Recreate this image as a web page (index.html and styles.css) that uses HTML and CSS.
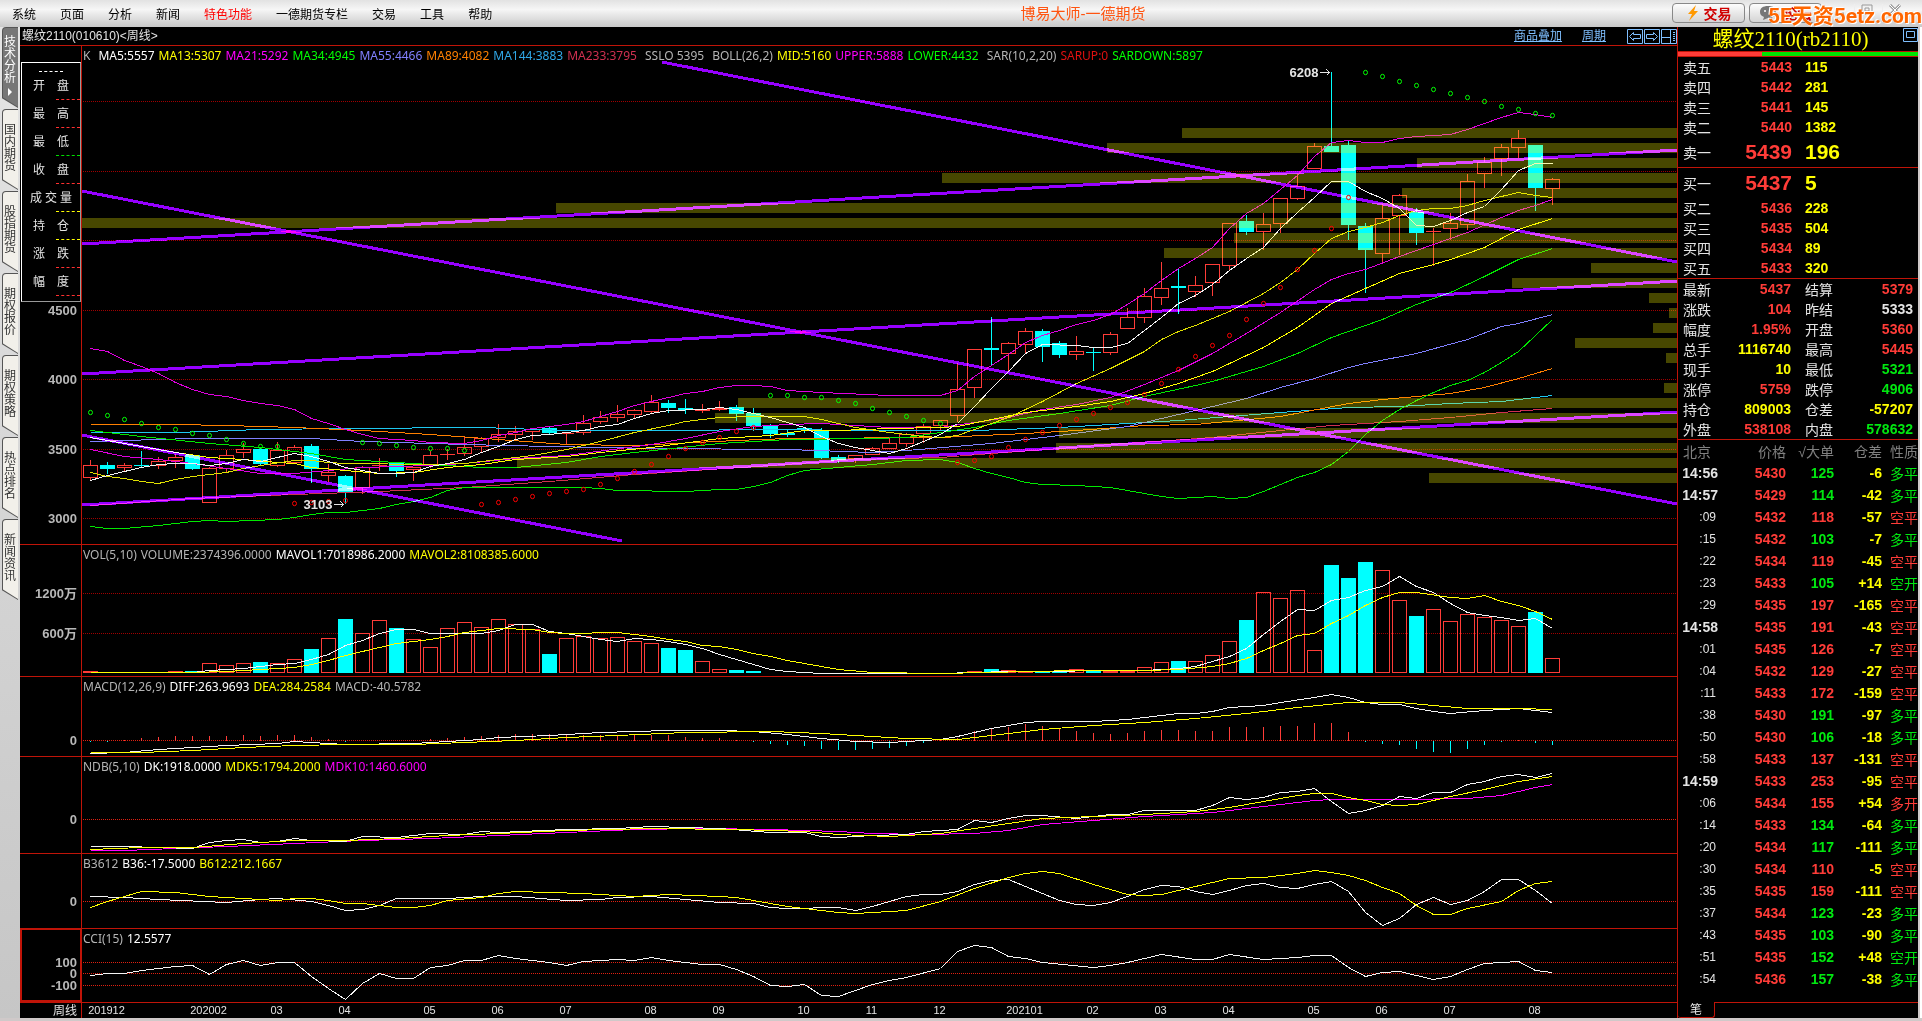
FILE: index.html
```html
<!DOCTYPE html>
<html lang="zh-CN">
<head>
  <meta charset="UTF-8">
  <meta name="viewport" content="width=device-width, initial-scale=1.0">
  <title>博易大师-一德期货</title>
  <link rel="stylesheet" href="styles.css">
</head>
<body>

  <!-- Menu bar -->
  <header class="topbar">
    <nav class="menu">
      <button>系统</button>
      <button>页面</button>
      <button>分析</button>
      <button>新闻</button>
      <button class="hot">特色功能</button>
      <button>一德期货专栏</button>
      <button>交易</button>
      <button>工具</button>
      <button>帮助</button>
    </nav>
    <h1 class="app-title">博易大师-一德期货</h1>
    <div class="top-actions">
      <button class="pill">
        <svg width="14" height="16" viewBox="0 0 14 16"><path d="M10 0L2 9h4L3 16l9-10H8z" fill="#f90"/></svg>交易
      </button>
      <button class="pill">
        <svg width="20" height="14" viewBox="0 0 20 14"><path d="M8 0c5 0 8 2 8 6s-3 6-8 6l-5 2 1-3C1 10 0 8 0 6c0-4 3-6 8-6z" fill="#777"/><circle cx="5" cy="5" r="1" fill="#fff"/><circle cx="10" cy="5" r="1" fill="#fff"/></svg>论坛
      </button>
      <button class="win" aria-label="最小化"><svg width="12" height="12"><path d="M1 9.500h10" stroke="#aaa" stroke-width="2"/></svg></button>
      <button class="win" aria-label="还原"><svg width="12" height="12"><path d="M1 1h10v9H1zM4 4h4v3H4z" fill="none" stroke="#999"/></svg></button>
      <button class="win" aria-label="关闭"><svg width="12" height="12"><path d="M1 1l10 10M11 1L1 11" stroke="#999" stroke-width="3"/><path d="M1 1l10 10M11 1L1 11" stroke="#fff"/></svg></button>
    </div>
    <span class="watermark">5E天资5etz.com</span>
  </header>

  <div class="workspace">

    <!-- Left page tabs -->
    <nav class="side-tabs">
      <button class="side-tab active"><span>技术分析</span><i></i></button>
      <button class="side-tab"><span>国内期货</span></button>
      <button class="side-tab"><span>股指期货</span></button>
      <button class="side-tab"><span>期权报价</span></button>
      <button class="side-tab"><span>期权策略</span></button>
      <button class="side-tab"><span>热点排名</span></button>
      <button class="side-tab"><span>新闻资讯</span></button>
    </nav>

    <!-- Charts -->
    <main class="charts">
      <div class="chart-head">
        <h2>螺纹2110(010610)&lt;周线&gt;</h2>
        <a href="#" class="l1">商品叠加</a>
        <a href="#" class="l2">周期</a>
        <div class="chart-tools">
          <button aria-label="左移"><svg width="16" height="15"><path d="M.5.500h15v14H.5zM2.500 7.500l4-4v2h7v4h-7v2z"/></svg></button>
          <button aria-label="右移"><svg width="16" height="15"><path d="M.5.500h15v14H.5zM13.500 7.500l-4-4v2h-7v4h7v2z"/></svg></button>
          <button aria-label="布局"><svg width="16" height="15"><path d="M.5.500h15v14H.5zM9.500 1v13M1 8.500h8M12 3.500h2M12 5.500h2M12 7.500h2M12 9.500h2M12 11.500h2"/></svg></button>
        </div>
      </div>

      <section class="panel">
        <svg id="price" height="498"></svg>
        <p class="legend">
          <span>K</span><span class="white sp1">MA5:5557</span><span class="yellow">MA13:5307</span><span class="magenta">MA21:5292</span><span class="green">MA34:4945</span><span class="violet">MA55:4466</span><span class="orange">MA89:4082</span><span class="blue">MA144:3883</span><span class="crimson">MA233:3795</span><span class="sp2">SSLO 5395</span><span class="sp2">BOLL(26,2)</span><span class="yellow">MID:5160</span><span class="magenta">UPPER:5888</span><span class="green">LOWER:4432</span><span class="sp2">SAR(10,2,20)</span><span class="red">SARUP:0</span><span class="green">SARDOWN:5897</span>
        </p>
        <dl class="quote-box">
          <dd class="c-top"></dd>
          <dt><b>开</b><b>盘</b></dt><dd class="c-red"></dd>
          <dt><b>最</b><b>高</b></dt><dd class="c-red"></dd>
          <dt><b>最</b><b>低</b></dt><dd class="c-green"></dd>
          <dt><b>收</b><b>盘</b></dt><dd class="c-red"></dd>
          <dt class="wide"><b>成</b><b>交</b><b>量</b></dt><dd class="c-yellow"></dd>
          <dt><b>持</b><b>仓</b></dt><dd class="c-yellow"></dd>
          <dt><b>涨</b><b>跌</b></dt><dd class="c-red"></dd>
          <dt><b>幅</b><b>度</b></dt><dd class="c-red"></dd>
        </dl>
      </section>
      <section class="panel">
        <svg id="vol" height="131"></svg>
        <p class="legend"><span>VOL(5,10)</span><span>VOLUME:2374396.0000</span><span class="white">MAVOL1:7018986.2000</span><span class="yellow">MAVOL2:8108385.6000</span></p>
      </section>
      <section class="panel">
        <svg id="macd" height="79"></svg>
        <p class="legend"><span>MACD(12,26,9)</span><span class="white">DIFF:263.9693</span><span class="yellow">DEA:284.2584</span><span>MACD:-40.5782</span></p>
      </section>
      <section class="panel">
        <svg id="ndb" height="96"></svg>
        <p class="legend"><span>NDB(5,10)</span><span class="white">DK:1918.0000</span><span class="yellow">MDK5:1794.2000</span><span class="magenta">MDK10:1460.6000</span></p>
      </section>
      <section class="panel">
        <svg id="b3612" height="74"></svg>
        <p class="legend"><span>B3612</span><span class="white">B36:-17.5000</span><span class="yellow">B612:212.1667</span></p>
      </section>
      <section class="panel">
        <svg id="cci" height="73"></svg>
        <p class="legend"><span>CCI(15)</span><span class="white">12.5577</span></p>
      </section>
      <section class="panel last">
        <svg id="dates" height="15"></svg>
      </section>
    </main>

    <!-- Quote column -->
    <aside class="quotes">
      <div class="q-title">
        <h2>螺纹2110(rb2110)</h2>
        <button aria-label="放大"><svg width="15" height="15"><path d="M.5.500h14v13H.5zM3.500 3.500h8v6h-8z"/></svg></button>
      </div>
      <div class="ratio"><div style="width:35%"></div></div>
      <table class="depth" id="asks"></table>
      <table class="depth" id="bids"></table>
      <table class="info" id="info"></table>
      <table class="ticks">
        <thead><tr><th class="t">北京</th><th>价格</th><th>√大单</th><th>仓差</th><th>性质</th></tr></thead>
        <tbody id="ticks"></tbody>
      </table>
      <div class="q-tabs"><button>笔</button><span></span></div>
    </aside>
  </div>

  <script src="chart.js"></script>
</body>
</html>
```
FILE: styles.css
```css
* {
  box-sizing: border-box;
}
body {
  margin: 0;
  min-height: 100vh;
  display: flex;
  flex-direction: column;
  background: #cfc9c9;
  color: #e4e4e4;
  font-family: "Liberation Sans", "Noto Sans CJK SC", sans-serif;
  font-size: 12px;
}
h1, h2, p, dl, dd {
  margin: 0;
  font-weight: normal;
}
button {
  padding: 0;
  border: 0;
  background: none;
  color: inherit;
  font: inherit;
}
svg {
  display: block;
}
table {
  border-collapse: collapse;
  table-layout: fixed;
  width: 100%;
}
th, td {
  padding: 0;
  font-weight: normal;
  white-space: nowrap;
}

/* top bar */
.topbar {
  position: relative;
  display: flex;
  align-items: center;
  height: 27px;
  background: linear-gradient(#e2e2e2, #f6f6f6 35%, #c8c8c8);
  color: #000;
  overflow: hidden;
}
.menu {
  display: flex;
  gap: 24px;
  padding-left: 12px;
}
.menu .hot {
  color: #f00;
}
.app-title {
  position: absolute;
  left: 244px;
  right: 0;
  text-align: center;
  pointer-events: none;
  font-size: 15px;
  line-height: 24px;
  color: #ff5410;
}
.top-actions {
  display: flex;
  align-items: center;
  gap: 4px;
  margin-left: auto;
  padding-right: 16px;
  padding-bottom: 2px;
}
.pill {
  display: flex;
  align-items: center;
  justify-content: center;
  gap: 4px;
  width: 73px;
  height: 20px;
  border: 1px solid #888;
  border-radius: 4px;
  background: linear-gradient(#fdfdfd, #d4d4d4);
  color: #d00000;
  font-size: 14px;
  font-weight: bold;
}
.win {
  display: flex;
  justify-content: center;
  width: 24px;
  height: 18px;
  border-left: 1px solid #eee;
}
.watermark {
  position: absolute;
  right: 0;
  top: 4px;
  color: #ff6600;
  font: bold 21px/24px Roboto, "Noto Sans CJK SC", sans-serif;
  text-shadow: 1px 1px #fff, -1px -1px #fff;
}

/* body of the window */
.workspace {
  display: flex;
  flex: 1;
  margin-bottom: 3px;
  padding-right: 2px;
  border-right: 2px solid #fff;
}

/* left tabs */
.side-tabs {
  width: 20px;
  padding: 0 0 0 2px;
  background: linear-gradient(#e4e4e4, #c6c6c6);
}
.side-tab {
  display: flex;
  flex-direction: column;
  align-items: center;
  justify-content: center;
  position: relative;
  width: 16px;
  height: 81px;
  margin-bottom: 1px;
  padding-bottom: 4px;
  border-radius: 4px 0 0 0;
  background: #555;
  color: #333;
  line-height: 12px;
  clip-path: polygon(0 0, 100% 0, 100% 100%, 0 88%);
}
.side-tab::before {
  content: "";
  position: absolute;
  inset: 1px 0 1px 1px;
  border-radius: 3px 0 0 0;
  background: #f2f0ea;
  clip-path: polygon(0 0, 100% 0, 100% 100%, 0 88%);
}
.side-tab span {
  position: relative;
  width: 12px;
  word-break: break-all;
}
.side-tab.active {
  color: #fff;
}
.side-tab.active::before {
  background: #777;
}
.side-tab i {
  position: relative;
  margin-top: 4px;
  border-left: 4px solid #fff;
  border-top: 4px solid transparent;
  border-bottom: 4px solid transparent;
}

/* charts */
.charts {
  flex: 1;
  min-width: 0;
  background: #000;
}
.chart-head {
  display: flex;
  align-items: center;
  height: 19px;
  padding-left: 2px;
  border-bottom: 1px solid #c01408;
}
.chart-head h2 {
  font-size: 12px;
  line-height: 18px;
}
.chart-head a {
  color: #7fbfff;
  line-height: 14px;
}
.chart-head .l1 {
  margin-left: auto;
  margin-right: 20px;
}
.chart-head .l2 {
  margin-right: 21px;
}
.chart-tools {
  display: flex;
  gap: 1px;
}
.chart-tools path,
.q-title path {
  fill: none;
  stroke: #7fbfff;
}
.panel {
  display: grid;
  position: relative;
  border-bottom: 1px solid #c01408;
}
.panel.last {
  border-bottom: 0;
}
.panel > svg {
  grid-area: 1 / 1;
  width: 100%;
}
.legend {
  grid-area: 1 / 1;
  z-index: 1;
  display: flex;
  gap: 4px;
  padding-left: 63px;
  color: #b4b4b4;
  font-family: "Noto Sans", "Liberation Sans", sans-serif;
  line-height: 20px;
  white-space: nowrap;
}
.sp1, .sp2 {
  margin-left: 4px;
}
.white { color: #fff; }
.yellow { color: #ff0; }
.magenta { color: #f0f; }
.green { color: #0f0; }
.violet { color: #8080ff; }
.orange { color: #ff8000; }
.blue { color: #30a8e8; }
.crimson { color: #d03050; }
.red { color: #e01010; }

/* floating quote box over the price axis */
.quote-box {
  position: absolute;
  left: 1px;
  top: 16px;
  width: 60px;
  height: 240px;
  padding-top: 1px;
  border: 1px solid #fff;
  border-right-color: #999;
  border-bottom-color: #999;
}
.quote-box dt {
  display: flex;
  justify-content: space-between;
  width: 36px;
  height: 26px;
  margin-left: 11px;
  line-height: 26px;
}
.quote-box dt.wide {
  width: 42px;
  margin-left: 8px;
}
.quote-box dt b {
  font-weight: normal;
}
.quote-box dd {
  width: 24px;
  height: 2px;
  margin-left: 34px;
  border-top: 1px dashed;
}
.quote-box .c-top {
  height: 2px;
  margin: 7px 0 0 17px;
  color: #fff;
}
.c-red { color: #ff3030; }
.c-green { color: #00e000; }
.c-yellow { color: #ff0; }

/* svg parts */
.grid {
  stroke: #a00000;
  stroke-dasharray: 1 1;
}
.grid.hot {
  stroke: #e02010;
}
.axis {
  stroke: #c01408;
}
.line {
  fill: none;
}
.band {
  fill: #ff0;
  fill-opacity: .28;
}
.trend {
  stroke: #9600ff;
  stroke-width: 3;
  mix-blend-mode: plus-lighter;
}
.up {
  fill: none;
  stroke: #ff3c38;
}
.down {
  fill: #0ff;
  stroke: #0ff;
}
.sar {
  fill: none;
  shape-rendering: geometricPrecision;
}
.ylab {
  fill: #b8b8b8;
  font-size: 13px;
  font-weight: bold;
  text-anchor: end;
}
.mark {
  fill: #e4e4e4;
  font-size: 13px;
  font-weight: bold;
}
.date {
  fill: #e4e4e4;
  font-size: 11px;
  text-anchor: middle;
}
.focus {
  fill: none;
  stroke: #c01408;
  stroke-width: 2;
}

/* quote column */
.quotes {
  display: flex;
  flex-direction: column;
  width: 241px;
  border-left: 1px solid #c01408;
  background: #000;
  font-size: 14px;
}
.q-title {
  display: flex;
  align-items: flex-start;
  height: 24px;
}
.q-title h2 {
  flex: 1;
  color: #ff0;
  font-family: "Liberation Serif", "Noto Sans CJK SC", serif;
  font-size: 21px;
  line-height: 24px;
  text-align: center;
}
.q-title button {
  margin-top: 1px;
}
.ratio {
  height: 6px;
  border-top: 1px solid #c01408;
  border-bottom: 1px solid #c01408;
  background: #00e400;
}
.ratio div {
  height: 100%;
  background: #ff3c38;
}
.depth, .info {
  border-bottom: 1px solid #c01408;
}
.depth tr, .info tr {
  height: 20px;
}
.depth tr.big {
  height: 30px;
}
.depth th, .info th {
  text-align: left;
  padding-left: 5px;
}
.depth th {
  width: 46px;
}
.depth td, .info td, .ticks td {
  text-align: right;
  font-weight: bold;
}
.depth td {
  width: 68px;
}
.depth td + td {
  width: auto;
  padding-left: 13px;
  text-align: left;
}
.depth .big td {
  font-size: 21px;
}
.info th {
  width: 40px;
}
.info td {
  width: 73px;
}
.info td + th {
  width: 54px;
  padding-left: 14px;
}
.info td + th + td {
  width: auto;
  padding-right: 5px;
}
.r { color: #ff3c38; }
.g { color: #00e810; }
.y { color: #ff0; }
.ticks tr {
  height: 22px;
}
.ticks th {
  width: 48px;
  color: #808080;
  text-align: right;
}
.ticks th.t {
  width: 40px;
  padding-left: 5px;
  text-align: left;
}
.ticks th:nth-child(2) {
  width: 68px;
}
.ticks th:last-child {
  width: auto;
}
.ticks td.sec {
  padding-right: 2px;
  font-size: 12px;
}
.ticks td.sec,
.ticks td:last-child {
  font-weight: normal;
}
.q-tabs {
  display: flex;
  height: 16px;
  margin-top: auto;
}
.q-tabs button {
  width: 37px;
  border: 1px solid #c01408;
  border-top: 0;
  border-left: 0;
  border-radius: 0 0 3px 3px;
  font-size: 12px;
  line-height: 14px;
}
.q-tabs span {
  flex: 1;
  border-top: 1px solid #c01408;
}
```
FILE: chart.js
```js
// all charts share one bar pitch; x is counted from the left edge of the panel
const AXIS = 61.5;
const BASE = 1595;
let k = 1;
const X = i => Math.round(62 + (8 + 17 * i) * k) + 0.5;
const P = x => 62 + x * k;

// candles: [body top, body bottom, high, low, 1 = down]
const candles = [
  [465,478,460,480],[465,469,462,474,1],[465,468,463,472],[465,466,451,467,1],[461,466,457,469],
  [457,461,454,468],[455,469,454,470,1],[468,503,467,503],[455,469,450,472],[449,453,443,458],
  [449,464,447,465,1],[450,466,442,467],[447,463,445,464],[446,469,444,483,1],[472,476,464,482],
  [476,492,475,504,1],[467,488,466,494],[465,466,458,471],[463,471,463,477,1],[467,470,467,481],
  [455,465,451,468],[454,455,449,460],[447,454,436,456],[438,447,437,453],[434,438,424,442],
  [431,435,426,440],[429,432,428,440],[428,433,427,435,1],[433,434,433,445],[423,433,415,435],
  [417,422,411,424],[414,418,405,422],[410,415,409,419],[402,412,395,413],[403,408,400,413,1],
  [408,410,399,414,1],[409,411,404,413],[408,410,401,411],[407,414,405,421,1],[413,426,408,431,1],
  [426,434,424,438,1],[433,435,429,437,1],[428,429,427,433,1],[430,458,428,459,1],[457,461,455,463,1],
  [455,459,455,463],[448,455,447,455],[443,449,438,449],[434,444,433,447],[426,434,424,443],
  [420,426,420,430],[389,416,363,422],[349,388,349,398],[348,350,317,365,1],[343,354,342,371],
  [331,345,328,353],[331,347,329,362,1],[343,355,341,358,1],[351,355,336,360],[352,353,348,371,1],
  [334,353,332,355],[317,329,308,329],[296,318,288,323],[288,298,262,305],[286,288,269,314,1],
  [285,292,276,297],[264,283,264,296],[223,266,223,270],[221,232,215,235,1],[224,232,213,250],
  [198,224,198,233],[186,199,174,200],[146,169,143,169],[146,152,72,152,1],[145,225,141,240,1],
  [226,250,223,293,1],[218,254,204,262],[195,216,194,255],[212,233,208,245,1],[231,232,228,266],
  [223,229,213,240],[181,225,174,230],[162,174,157,188],[147,159,144,176],[138,148,130,158],
  [145,188,145,211,1],[179,189,178,205]
];

const volume = [
  671,672,672,672,672,671,671,663,665,663,662,663,659,649,638,619,633,620,628,639,
  647,628,622,627,619,624,629,654,638,636,638,637,641,643,648,650,661,669,670,671,
  672,672,672,672,672,672,672,672,672,672,672,672,671,669,670,671,671,671,669,671,
  671,671,667,662,661,661,655,641,620,592,598,590,650,565,578,562,570,600,616,609,
  621,614,617,620,626,612,658
];

const macdBars = [
  -1,-1,1,3,4,5,5,5,5,6,5,6,6,4,2,-1,0,0,0,1,2,3,4,5,6,7,7,7,6,6,6,6,6,6,6,4,3,3,1,-1,
  -3,-4,-5,-8,-9,-9,-8,-7,-5,-2,1,3,10,13,14,17,15,13,10,8,7,8,10,11,11,10,10,14,14,14,
  15,15,18,18,9,-1,-3,-4,-8,-11,-12,-8,-4,-1,1,-2,-4
];

// volume-by-price bands: [y, left edge]
const bands = [
  [128,1100],[143,1025],[158,1335],[173,860],[188,1320],[203,474],[218,0],[233,1152],[248,1082],
  [263,1509],[278,1430],[293,1567],[308,1587],[323,1571],[338,1493],[353,1584],[383,1582],
  [398,656],[413,633],[428,977],[443,974],[458,435],[473,1347]
];

const trends = [
  [0,191,1595,504],[580,62,1595,262],[0,244,1595,150],[0,374,1595,281],[0,505,1595,412],[0,435,540,541]
];

// "bar:y" pairs, straight segments in between
const priceLines = [
  ['#1ec8f0', '0:432 5:432 10:429 15:428 23:427 28:430 34:430 40:429 46:430 52:430 57:427 61:423 64:420 70:412 74:407 77:406 80:403 83:401 86:395'],
  ['#ff8000', '0:424 5:424 8:425 12:427 16:430 20:434 24:439 28:444 32:445 38:440 41:438 50:437 55:433 58:430 62:425 65:424 70:416 74:403 76:399 78:396 80:393 82:387 84:378 86:368'],
  ['#8080ff', '0:441 6:438 13:438 16:441 22:444 27:446 33:448 41:449 46:452 48:450 53:443 57:435 61:426 65:410 66:406 68:398 70:387 72:378 74:367 75:363 78:353 81:339 83:326 84:323 86:314'],
  ['#d03050', '0:505 6:498 12:494 17:491 22:487 27:481 32:474 40:465 45:459 50:457 53:453 57:448 60:444 66:437 70:430 73:425 77:421 80:417 83:412 86:408'],
  ['#00e800', '0:430 3:436 7:443 10:447 13:453 15:459 18:462 20:464 23:467 25:467 28:462 30:456 32:452 37:443 41:439 46:438 48:437 50:432 52:427 54:420 57:413 60:405 62:396 65:385 66:381 69:366 71:353 73:337 75:325 76:319 78:304 80:292 82:276 84:259 86:248'],
  ['#e000e0', '0:449 2:456 4:459 6:463 8:468 10:473 12:473 14:470 16:467 18:466 20:465 22:463 25:458 28:455 33:444 35:438 37:431 39:426 41:424 43:423 45:425 47:427 50:427 52:422 54:417 56:409 58:404 60:397 62:384 64:370 66:353 68:333 70:312 72:289 73:279 74:273 75:269 77:256 79:244 81:232 83:217 84:210 85:205 86:199'],
  ['#ffff00', '0:437 3:446 5:452 7:457 9:459 11:462 12:463 13:467 15:470 17:473 19:472 21:467 23:464 25:459 28:456 30:452 33:447 37:438 40:435 42:430 44:430 47:428 50:427 51:426 53:419 55:412 58:406 60:401 62:393 64:383 66:371 68:355 69:347 71:327 73:303 75:288 77:273 79:264 80:259 82:247 84:229 86:218'],
  ['#e0e000', '0:472 1:476 2:478 3:481 4:483 5:479 6:476 7:474 8:472 9:468 10:465 12:460 13:460 14:462 15:463 20:464 22:463 24:459 26:455 28:449 30:441 32:432 34:425 35:421 37:417 39:416 42:416 43:419 45:427 47:432 49:436 50:437 51:435 52:429 54:417 56:401 58:383 60:368 62:351 63:339 64:331 65:325 67:311 69:293 70:282 71:269 72:253 73:238 74:231 75:227 76:222 77:215 78:210 79:208 80:208 81:205 82:200 83:196 84:192 85:195 86:197'],
  ['#e000e0', '0:348 1:351 2:360 3:366 4:373 5:382 6:389 7:394 8:396 9:400 10:403 11:405 12:409 13:418 14:423 15:429 16:434 17:438 18:439 19:440 20:442 22:443 23:440 24:435 25:432 26:428 28:424 29:421 30:416 31:411 32:405 33:401 35:393 36:391 37:387 38:385 39:385 40:386 41:390 43:392 47:395 50:395 51:390 52:376 53:365 54:354 55:342 56:335 57:330 58:324 59:320 60:314 61:304 62:293 63:280 64:268 65:258 66:247 67:228 68:213 69:203 70:189 71:175 72:156 73:142 74:140 75:142 76:142 77:138 78:136 80:134 81:129 82:123 83:117 84:112 85:114 86:117'],
  ['#00e800', '0:526 1:528 2:528 4:525 6:521 7:520 8:521 11:519 12:517 13:514 14:512 15:512 17:508 18:504 19:501 20:497 21:490 22:487 29:487 30:488 31:490 35:491 37:489 38:489 39:486 40:482 41:475 42:470 44:467 46:464 48:460 50:459 51:462 52:468 53:473 54:477 55:482 56:484 58:485 60:487 62:493 63:496 64:498 66:496 67:498 68:497 69:491 70:484 71:477 72:472 73:464 74:451 75:434 76:420 77:409 78:400 79:392 80:385 81:380 82:372 83:362 84:351 85:335 86:319'],
  ['#f4f4f4', '0:480 1:475 2:471 3:467 4:464 5:463 6:463 7:465 8:463 9:459 10:461 11:457 12:453 13:456 14:461 15:467 16:470 17:473 18:473 19:472 20:466 21:463 22:459 23:452 24:446 25:439 26:435 27:434 28:432 29:430 30:426 31:424 32:418 33:413 34:410 36:409 37:407 38:409 39:413 40:417 41:422 42:427 43:436 44:443 45:447 46:450 47:453 48:448 49:441 50:434 51:423 52:406 53:388 54:371 55:353 56:344 58:345 59:347 60:347 61:343 62:330 63:317 64:303 65:295 66:284 67:270 68:258 69:247 70:228 71:212 72:197 73:181 74:181 75:191 76:198 77:208 78:225 79:226 80:220 81:212 82:206 83:189 84:170 85:163 86:163']
];

const sarUp = '12:503 13:502 14:501 15:500 23:504 24:502 25:499 26:496 27:493 28:491 29:489 30:484 31:478 32:471 33:464 34:456 35:448 36:442 37:437 38:431 39:427 51:462 52:460 53:456 54:447 55:439 56:432 57:425 58:419 59:413 60:407 61:402 62:394 63:383 64:369 65:356 66:345 67:335 68:319 69:303 70:287 71:269 72:250 73:228 74:197';
const sarDown = '0:412 1:415 2:419 3:423 4:427 5:429 6:433 7:435 8:439 9:443 10:446 11:446 16:442 17:443 18:445 19:447 20:448 21:448 22:450 40:395 41:395 42:397 43:397 44:400 45:403 46:408 47:412 48:416 49:420 50:423 75:72 76:76 77:81 78:85 79:89 80:93 81:97 82:101 83:106 84:109 85:113 86:115';

const volLines = [
  ['#f4f4f4', '0:672 6:672 7:670 9:668 11:664 12:663 13:659 14:654 15:645 16:640 17:633 18:629 19:629 20:633 23:633 24:630 25:624 26:624 27:631 28:633 29:636 30:639 31:641 32:638 33:639 34:641 35:644 36:648 37:654 38:659 39:664 40:669 41:671 43:673 50:673 54:671 62:670 64:668 65:666 66:661 67:656 68:648 69:634 70:621 71:609 72:610 73:600 74:597 75:590 76:586 77:576 78:586 79:592 80:603 81:612 82:615 83:617 84:620 85:618 86:628'],
  ['#ffff00', '0:672 6:672 8:671 12:667 13:664 14:660 15:655 16:651 18:643 20:639 21:636 22:632 24:628 26:629 27:632 28:633 31:632 32:634 33:636 34:639 35:641 36:645 37:646 38:649 39:653 40:656 41:660 42:663 43:666 44:669 46:672 50:673 58:670 62:670 64:669 66:666 67:663 68:658 69:650 70:643 71:635 72:633 73:623 74:615 75:605 76:597 77:592 78:592 80:597 81:598 82:595 83:601 84:605 85:611 86:619']
];
const macdLines = [
  ['#f4f4f4', '0:753 2:752 4:749 5:748 8:745 11:743 12:741 15:744 19:743 21:741 23:739 24:737 27:735 30:732 34:730 37:730 39:731 41:734 43:738 45:741 47:742 50:739 51:736 53:728 55:722 56:721 59:721 61:719 64:713 65:713 66:711 67:707 69:705 70:702 72:697 73:694 74:697 75:702 76:704 77:704 78:708 79:711 80:713 82:710 84:708 86:712'],
  ['#ffff00', '0:752 3:752 6:750 9:747 12:745 15:744 19:744 22:742 25:740 28:737 31:735 35:732 40:731 43:733 45:735 48:738 51:739 53:735 56:729 59:725 62:722 65:718 68:713 71:707 74:702 77:702 79:705 81:708 84:708 86:709']
];
const ndbLines = [
  ['#ff00ff', '0:850 2:850 5:848 8:846 12:843 16:840 20:838 24:835 28:832 32:829 36:828 40:829 44:831 46:833 49:834 52:833 54:830 56:824 59:820 62:816 66:812 69:806 72:800 73:799 77:799 81:798 83:795 85:787 86:784'],
  ['#f4f4f4', '0:846 2:846 4:847 6:848 7:842 8:840 9:839 10:842 11:841 12:838 13:840 15:841 16:836 18:837 20:833 22:834 23:831 24:832 28:829 31:828 33:826 37:828 40:832 42:832 43:836 44:837 46:835 48:834 49:831 51:829 52:820 53:822 54:818 55:815 56:815 58:818 60:814 61:814 62:810 65:810 66:805 67:797 68:799 69:797 70:792 71:791 72:788 73:801 74:813 75:810 76:805 77:796 78:798 79:792 80:792 81:784 82:781 83:776 84:774 85:777 86:773'],
  ['#ffff00', '0:849 3:847 6:847 9:843 12:840 15:840 18:838 21:835 24:833 28:830 33:828 38:829 42:831 44:834 47:836 50:833 52:828 54:823 56:818 59:816 62:814 65:811 67:807 69:801 71:795 72:793 73:793 74:797 75:800 76:804 77:805 78:804 80:796 82:789 84:781 86:776']
];
const b3612Lines = [
  ['#f4f4f4', '0:896 2:897 4:899 8:902 10:899 11:898 13:901 14:905 15:910 16:909 17:905 18:898 21:898 23:896 25:896 28:900 30:899 31:897 33:896 35:899 37:902 39:903 40:907 41:908 44:907 45:910 46:906 47:901 48:896 49:894 50:894 51:891 52:884 53:880 54:879 55:886 57:900 58:904 59:905 60:902 61:896 62:889 63:885 64:886 65:891 66:894 67:890 68:885 69:883 70:887 71:888 72:884 73:881 74:891 75:912 76:925 77:918 78:904 79:897 80:904 81:900 82:891 83:879 84:879 85:890 86:903'],
  ['#ffff00', '0:907 1:901 3:891 5:892 7:896 9:898 11:900 12:898 13:898 14:900 15:903 16:903 18:907 19:907 20:905 21:900 23:897 24:893 25:891 29:893 30:894 32:896 34:894 37:896 38:897 39:900 40:903 41:906 44:912 45:913 48:910 50:901 52:888 54:877 55:873 56:871 57:873 59:884 61:894 62:895 63:894 65:886 67:878 69:877 71:873 72:870 73:872 74:875 75:880 76:887 77:893 78:905 79:914 80:914 81:908 83:901 84:890 85:883 86:881']
];
const cciLines = [
  ['#f4f4f4', '0:975 1:973 2:973 3:970 5:966 6:965 7:974 8:964 9:960 10:965 11:962 12:962 13:976 14:988 15:999 16:983 17:973 18:978 19:978 20:967 21:965 22:960 23:960 24:955 25:958 27:962 28:965 29:961 31:959 32:960 33:957 34:960 36:964 37:964 38:969 39:976 40:985 41:986 42:984 43:995 44:996 45:990 46:984 47:980 48:977 50:968 51:951 52:945 53:947 54:956 55:958 56:962 59:967 60:965 61:962 63:954 65:959 66:959 67:954 69:959 71:957 72:955 73:955 74:967 75:976 76:972 77:971 78:975 79:979 80:976 81:969 82:963 84:961 85:970 86:972']
];

const dates = [[1,'201912'],[7,'202002'],[11,'03'],[15,'04'],[20,'05'],[24,'06'],[28,'07'],[33,'08'],[37,'09'],[42,'10'],[46,'11'],[50,'12'],[55,'202101'],[59,'02'],[63,'03'],[67,'04'],[72,'05'],[76,'06'],[80,'07'],[85,'08']];

const pairs = s => s.split(' ').map(p => p.split(':').map(Number));

function polylines(list) {
  return list.map(([color, s]) =>
    `<polyline class="line" stroke="${color}" points="${pairs(s).map(([i, y]) => X(i) + ',' + (y + 0.5)).join(' ')}"/>`).join('');
}

function grid(rows, w, hot) {
  return rows.map(([y, label]) =>
    `<line class="grid ${hot}" x1="63" x2="${w}" y1="${y + 0.5}" y2="${y + 0.5}"/>` +
    (label ? `<text class="ylab" x="57" y="${y + 5}">${label}</text>` : '')).join('');
}

function draw(id, top, body) {
  const svg = document.getElementById(id);
  const w = svg.clientWidth;
  const h = svg.clientHeight;
  k = (w - 62) / BASE;
  svg.setAttribute('viewBox', `0 ${top} ${w} ${h}`);
  svg.innerHTML = `<g shape-rendering="crispEdges">${body(w)}<line class="axis" x1="${AXIS}" x2="${AXIS}" y1="${top}" y2="${top + h}"/></g>`;
}

function candle(c, i) {
  const [t, b, hi, lo, down] = c;
  const x = X(i);
  return `<g class="${down ? 'down' : 'up'}"><rect x="${x - 7}" y="${t + 0.5}" width="14" height="${Math.max(b - t - 1, 0.1)}"/>` +
    `<path d="M${x} ${hi}V${t}M${x} ${b}V${lo}"/></g>`;
}

function render() {
  draw('price', 46, w =>
    grid([[101], [171], [240], [310, '4500'], [379, '4000'], [449, '3500'], [518, '3000']], w, '') +
    candles.map(candle).join('') + polylines(priceLines) +
    bands.map(([y, x]) => `<rect class="band" x="${P(x)}" y="${y}" width="${w - P(x)}" height="10"/>`).join('') +
    trends.map(([a, b, c, d]) => `<line class="trend" x1="${P(a)}" y1="${b}" x2="${P(c)}" y2="${d}"/>`).join('') +
    [[sarUp, '#ff0000'], [sarDown, '#00ff00']].map(([s, c]) => pairs(s).map(([i, y]) =>
      `<ellipse class="sar" stroke="${c}" cx="${X(i)}" cy="${y + 0.5}" rx="2" ry="2.2"/>`).join('')).join('') +
    `<text class="mark" x="${X(73) - 42}" y="77">6208</text><path d="M${X(73) - 12} 72.500h10m-3-3l3 3l-3 3" fill="none" stroke="#e4e4e4"/>` +
    `<text class="mark" x="${X(15) - 42}" y="509">3103</text><path d="M${X(15) - 12} 504.500h10m-3-3l3 3l-3 3" fill="none" stroke="#e4e4e4"/>`);

  draw('vol', 545, w =>
    grid([[593, '1200万'], [633, '600万']], w, '') +
    volume.map((y, i) => `<rect class="${candles[i][4] ? 'down' : 'up'}" x="${X(i) - 7}" y="${y + 0.5}" width="14" height="${672 - y}"/>`).join('') +
    polylines(volLines));

  draw('macd', 677, w =>
    grid([[740, '0']], w, 'hot') +
    macdBars.map((v, i) => `<path stroke="${v < 0 ? '#0ff' : '#ff3c38'}" d="M${X(i)} 740.500v${-v}"/>`).join('') +
    polylines(macdLines));

  draw('ndb', 757, w => grid([[819, '0']], w, 'hot') + polylines(ndbLines));
  draw('b3612', 854, w => grid([[901, '0']], w, 'hot') + polylines(b3612Lines));
  draw('cci', 929, w =>
    grid([[962, '100'], [973, '0'], [985, '-100']], w, 'hot') + polylines(cciLines) +
    '<rect class="focus" x="1" y="929" width="60" height="72"/>');
  draw('dates', 1003, () =>
    '<text class="date" x="45" y="1015" style="font-size:12px">周线</text>' +
    dates.map(([i, t]) => `<text class="date" x="${X(i) - 1}" y="1014">${t}</text>`).join(''));
}

// quote tables
const asks = [['卖五', 5443, 115], ['卖四', 5442, 281], ['卖三', 5441, 145], ['卖二', 5440, 1382], ['卖一', 5439, 196]];
const bids = [['买一', 5437, 5], ['买二', 5436, 228], ['买三', 5435, 504], ['买四', 5434, 89], ['买五', 5433, 320]];
const info = [
  ['最新', 'r', '5437', '结算', 'r', '5379'], ['涨跌', 'r', '104', '昨结', '', '5333'],
  ['幅度', 'r', '1.95%', '开盘', 'r', '5360'], ['总手', 'y', '1116740', '最高', 'r', '5445'],
  ['现手', 'y', '10', '最低', 'g', '5321'], ['涨停', 'r', '5759', '跌停', 'g', '4906'],
  ['持仓', 'y', '809003', '仓差', 'y', '-57207'], ['外盘', 'r', '538108', '内盘', 'g', '578632']
];
const ticks = [
  ['14:56', 5430, 125, '-6', '多平'], ['14:57', 5429, 114, '-42', '多平'], [':09', 5432, 118, '-57', '空平'],
  [':15', 5432, 103, '-7', '多平'], [':22', 5434, 119, '-45', '空平'], [':23', 5433, 105, '+14', '空开'],
  [':29', 5435, 197, '-165', '空平'], ['14:58', 5435, 191, '-43', '空平'], [':01', 5435, 126, '-7', '空平'],
  [':04', 5432, 129, '-27', '空平'], [':11', 5433, 172, '-159', '空平'], [':38', 5430, 191, '-97', '多平'],
  [':50', 5430, 106, '-18', '多平'], [':58', 5433, 137, '-131', '空平'], ['14:59', 5433, 253, '-95', '空平'],
  [':06', 5434, 155, '+54', '多开'], [':14', 5433, 134, '-64', '多平'], [':20', 5434, 117, '-111', '多平'],
  [':30', 5434, 110, '-5', '空平'], [':35', 5435, 159, '-111', '空平'], [':37', 5434, 123, '-23', '多平'],
  [':43', 5435, 103, '-90', '多平'], [':51', 5435, 152, '+48', '空开'], [':54', 5436, 157, '-38', '多平']
];

const depthRow = ([n, p, v]) =>
  `<tr class="${n[1] === '一' ? 'big' : ''}"><th>${n}</th><td class="r">${p}</td><td class="y">${v}</td></tr>`;
document.getElementById('asks').innerHTML = asks.map(depthRow).join('');
document.getElementById('bids').innerHTML = bids.map(depthRow).join('');
document.getElementById('info').innerHTML = info.map(([a, c, v, b, d, u]) =>
  `<tr><th>${a}</th><td class="${c}">${v}</td><th>${b}</th><td class="${d}">${u}</td></tr>`).join('');
document.getElementById('ticks').innerHTML = ticks.map(([t, p, v, d, n]) => {
  const c = n === '空平' || n === '多开' ? 'r' : 'g';
  return `<tr><td class="${t[0] === ':' ? 'sec' : ''}">${t}</td><td class="r">${p}</td><td class="${c}">${v}</td><td class="y">${d}</td><td class="${c}">${n}</td></tr>`;
}).join('');

render();
window.addEventListener('resize', render);
```
